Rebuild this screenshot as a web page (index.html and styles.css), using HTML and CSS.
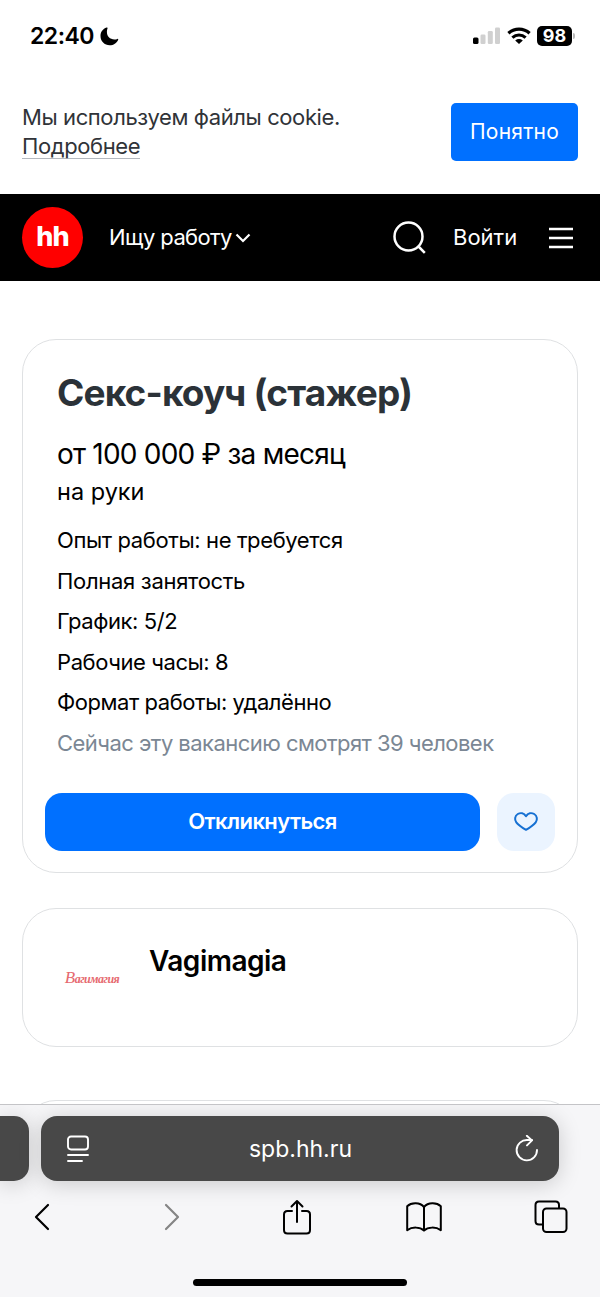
FILE: index.html
```html
<!DOCTYPE html>
<html lang="ru">
<head>
<meta charset="utf-8">
<title>Вакансия</title>
<link rel="stylesheet" href="styles.css">
</head>
<body>
<div class="screen">
  <header class="status">
    <span class="clock">22:40</span>
    <svg class="moon" width="19" height="19" viewBox="0 0 19 19"><path d="M6.600.6C2.900 1.800.5 5 .5 9c0 5.200 4 9.300 9.200 9.300 3.800 0 7-2.100 8.500-5.600.2-.6-.2-1-.8-.8-1 .4-1.900.5-2.900.5-4.700 0-7.600-3-7.600-7.600 0-1.200.2-2.300.6-3.300.2-.6-.3-1.100-.9-.9z"/></svg>
    <svg class="signal" width="28" height="18" viewBox="0 0 28 18"><rect y="10.500" width="5.500" height="6.500" rx="1.500"/><g fill="#d0d0d0"><rect x="7.500" y="7.500" width="5" height="9.500" rx="1.300"/><rect x="14.800" y="4" width="5" height="13" rx="1.300"/><rect x="22" y=".5" width="5" height="16.500" rx="1.300"/></g></svg>
    <svg class="wifi" width="24" height="18" viewBox="0 0 24 18"><g fill="none" stroke="#000" stroke-width="3.200"><path d="M1.400 6.300c6-5.500 15.200-5.500 21.200 0"/><path d="M5.400 10.600c3.900-3.500 9.300-3.500 13.200 0"/></g><path d="M12 17l-3.800-3.600c2.300-1.900 5.300-1.900 7.600 0z"/></svg>
    <span class="battery">98</span><i class="battery-tip"></i>
  </header>

  <section class="cookie">
    <p class="cookie-text"><span class="cookie-line">Мы используем файлы cookie.</span><br><a class="cookie-more">Подробнее</a></p>
    <button class="cookie-ok">Понятно</button>
  </section>

  <nav class="nav">
    <span class="logo">hh</span>
    <span class="nav-role">Ищу работу</span>
    <svg class="chevron" width="16" height="10" viewBox="0 0 16 10"><path d="M1.500 1.500L8 8l6.500-6.500" fill="none" stroke="#fff" stroke-width="2.200"/></svg>
    <svg class="search" width="34" height="34" viewBox="0 0 34 34"><g fill="none" stroke="#fff" stroke-width="2.500"><circle cx="15.500" cy="15.500" r="14"/><path d="M25 25l6.800 6.800"/></g></svg>
    <span class="login">Войти</span>
    <svg class="burger" width="24" height="22" viewBox="0 0 24 22"><path d="M0 2h24M0 11h24M0 20h24" stroke="#fff" stroke-width="2.500"/></svg>
  </nav>

  <main class="content">
    <article class="card vacancy">
      <h1 class="title">Секс-коуч (стажер)</h1>
      <p class="salary">от 100 000 ₽ за месяц</p>
      <p class="net">на руки</p>
      <ul class="facts">
        <li class="fact-exp">Опыт работы: не требуется</li>
        <li class="fact-full">Полная занятость</li>
        <li class="fact-week">График: 5/2</li>
        <li class="fact-hours">Рабочие часы: 8</li>
        <li class="fact-format">Формат работы: удалённо</li>
        <li class="viewers">Сейчас эту вакансию смотрят 39 человек</li>
      </ul>
      <div class="actions">
        <button class="apply">Откликнуться</button>
        <button class="fav"><svg width="26" height="22" viewBox="0 0 26 22"><path d="M13 5.200C11 1.900 7.500 1.500 4.800 3 1.800 4.900 1.300 8.600 3.300 11.300 5.500 14.300 9.600 16.800 13 18.800c3.400-2 7.500-4.500 9.700-7.500 2-2.700 1.500-6.400-1.500-8.300C18.500 1.500 15 1.900 13 5.200z" fill="none" stroke="#1670d2" stroke-width="2" stroke-linejoin="round"/></svg></button>
      </div>
    </article>
    <article class="card company">
      <div class="company-logo"><span><span class="company-initial">В</span>агимагия</span></div>
      <h2 class="company-name">Vagimagia</h2>
    </article>
    <article class="card next"></article>
  </main>

  <footer class="browser">
    <div class="tabs">
      <div class="tab-prev"></div>
      <div class="address">
        <svg width="24" height="28" viewBox="0 0 24 28"><g fill="none" stroke="#fff" stroke-width="1.900" stroke-linecap="round"><rect x="2" y="1.500" width="20" height="13" rx="3"/><path d="M2 20h20M2 26h14"/></g></svg>
        <span class="url">spb.hh.ru</span>
        <svg width="24" height="28" viewBox="0 0 24 28"><g fill="none" stroke="#fff" stroke-width="1.900" stroke-linecap="round" stroke-linejoin="round"><path d="M22 15A10.200 10.200 0 1 1 12.500 5H17"/><path d="M11.800.8L17 5.400l-5 5"/></g></svg>
      </div>
    </div>
    <div class="tools">
      <svg width="16" height="28" viewBox="0 0 16 28"><path d="M14 2L2 14l12 12" fill="none" stroke="#000" stroke-width="2.200" stroke-linecap="round" stroke-linejoin="round"/></svg>
      <svg class="tool-forward" width="16" height="28" viewBox="0 0 16 28"><path d="M2 2l12 12L2 26" fill="none" stroke="#858585" stroke-width="2.200" stroke-linecap="round" stroke-linejoin="round"/></svg>
      <svg class="tool-share" width="28" height="36" viewBox="0 0 28 36"><g fill="none" stroke="#000" stroke-width="2" stroke-linecap="round" stroke-linejoin="round"><path d="M9 12H4.500Q1 12 1 15.500V31q0 3.500 3.500 3.500h19q3.500 0 3.500-3.500V15.500Q27 12 23.500 12H19"/><path d="M14 23V2M8.500 7.500L14 2l5.500 5.500"/></g></svg>
      <svg class="tool-book" width="36" height="30" viewBox="0 0 36 30"><path d="M18 5C14 .2 5.500.2 1.200 4.200v24C6 24.700 14 24.700 18 28.600 22 24.700 30 24.700 34.800 28.200v-24C30.500.2 22 .2 18 5zM18 5v23.600" fill="none" stroke="#000" stroke-width="2" stroke-linejoin="round"/></svg>
      <svg class="tool-tabs" width="34" height="34" viewBox="0 0 34 34"><g fill="none" stroke="#000" stroke-width="2"><path d="M8.500 24.500H5q-3.500 0-3.500-3.500V5Q1.500 1.500 5 1.500h16.500q3.500 0 3.500 3.500v3.500"/><rect x="9" y="8.500" width="23.500" height="23.500" rx="3.500"/></g></svg>
    </div>
    <div class="home"></div>
  </footer>
</div>
</body>
</html>
```

FILE: styles.css
```css
* { box-sizing: border-box; }
body { margin: 0; background: #fff; font-family: Inter, "Liberation Sans", sans-serif; }
h1, h2, p, ul { margin: 0; padding: 0; }
button { border: 0; padding: 0; font-family: inherit; }
svg { display: block; flex: none; }
.screen { width: 600px; height: 1297px; display: flex; flex-direction: column; overflow: hidden; color: #000; white-space: nowrap; }

.status { height: 72px; flex: none; display: flex; align-items: center; padding: 0 25px 0 30px; }
.clock { width: 70px; font-size: 23px; font-weight: 600; letter-spacing: -.5px; }
.signal { margin-left: auto; margin-right: 6px; }
.wifi { margin-right: 6px; }
.battery { width: 35px; height: 20px; border-radius: 5px; background: #000; color: #fff; font-size: 18px; line-height: 20px; font-weight: 700; text-align: center; }
.battery-tip { width: 2px; height: 6px; margin-left: 1px; border-radius: 0 2px 2px 0; background: #bbb; }

.cookie { height: 122px; flex: none; display: flex; justify-content: space-between; align-items: flex-start; padding: 31px 22px 0; }
.cookie-text { font-size: 22px; line-height: 29px; letter-spacing: -.4px; color: #303338; }
.cookie-more { display: inline-block; height: 27px; line-height: 29px; border-bottom: 1px solid #b3b8bf; }
.cookie-ok { width: 127px; height: 58px; padding-bottom: 1px; border-radius: 5px; background: #0070ff; color: #fff; font-size: 21px; letter-spacing: .25px; }

.nav { height: 87px; flex: none; display: flex; align-items: center; padding: 0 27px 0 22px; background: #000; color: #fff; font-size: 22px; line-height: 26px; }
.logo { width: 61px; height: 61px; margin-right: 26px; border-radius: 50%; background: #f00; font-size: 27px; font-weight: 800; line-height: 60px; text-align: center; letter-spacing: -1px; }
.nav-role { width: 126px; padding-bottom: 2px; letter-spacing: -.65px; }
.search { margin-left: 142px; }
.login { margin-left: 26px; padding-bottom: 2px; }
.burger { margin-left: auto; }

.content { flex: 1; min-height: 0; overflow: hidden; padding: 58px 22px 0; }
.card { border: 1px solid #dfe1e3; border-radius: 34px; background: #fff; }
.vacancy { height: 534px; padding: 31px 22px 0; }
.title { padding-left: 12px; font-size: 37px; line-height: 44px; font-weight: 700; letter-spacing: -.85px; color: #2b3238; }
.salary { padding: 21px 0 0 12px; font-size: 28px; line-height: 36px; letter-spacing: -.78px; }
.net { padding-left: 12px; font-size: 23.500px; line-height: 40px; }
.facts { list-style: none; padding: 8px 0 0 12px; font-size: 22px; line-height: 40.600px; }
.fact-exp { letter-spacing: -.38px; }
.fact-full { letter-spacing: -.3px; }
.fact-week { letter-spacing: -.42px; }
.fact-hours { letter-spacing: -.42px; }
.fact-format { letter-spacing: -.44px; }
.viewers { color: #7b8794; letter-spacing: -.54px; }
.actions { display: flex; justify-content: space-between; margin-top: 29px; }
.apply { width: 435px; height: 58px; padding-bottom: 2px; border-radius: 17px; background: #0070ff; color: #fff; font-size: 22px; font-weight: 600; letter-spacing: -.6px; }
.fav { width: 58px; height: 58px; border-radius: 17px; background: #ebf4ff; display: flex; align-items: center; justify-content: center; }
.company { height: 139px; margin-top: 35px; padding: 34px; display: flex; gap: 22px; }
.company-logo { width: 70px; height: 70px; border-radius: 50%; display: flex; align-items: center; justify-content: center; font-family: "Liberation Serif", serif; font-size: 12px; font-weight: 700; font-style: italic; letter-spacing: -.5px; color: #e66a70; }
.company-initial { font-size: 17px; font-weight: 400; }
.company-name { font-size: 28px; line-height: 36px; font-weight: 600; letter-spacing: -.5px; }
.next { height: 100px; margin-top: 53px; }

.browser { height: 193px; flex: none; border-top: 1px solid #c4c4c7; background: #f6f6f8; overflow: hidden; }
.tabs { display: flex; gap: 12px; padding-top: 11px; }
.tab-prev, .address { height: 65px; background: #484848; box-shadow: 0 3px 22px rgba(0,0,0,.18); }
.tab-prev { width: 29px; border-radius: 0 15px 15px 0; }
.address { width: 518px; border-radius: 16px; display: flex; align-items: center; justify-content: space-between; padding: 0 20px 0 25px; color: #fff; }
.url { margin-right: 4px; font-size: 23px; }
.tools { height: 72px; display: flex; align-items: center; padding-left: 34px; }
.tool-forward { margin-left: 114px; }
.tool-share { margin-left: 103px; }
.tool-book { margin-left: 95px; }
.tool-tabs { margin-left: 92px; }
.home { width: 214px; height: 7px; margin: 26px auto 0; border-radius: 4px; background: #000; }
```
